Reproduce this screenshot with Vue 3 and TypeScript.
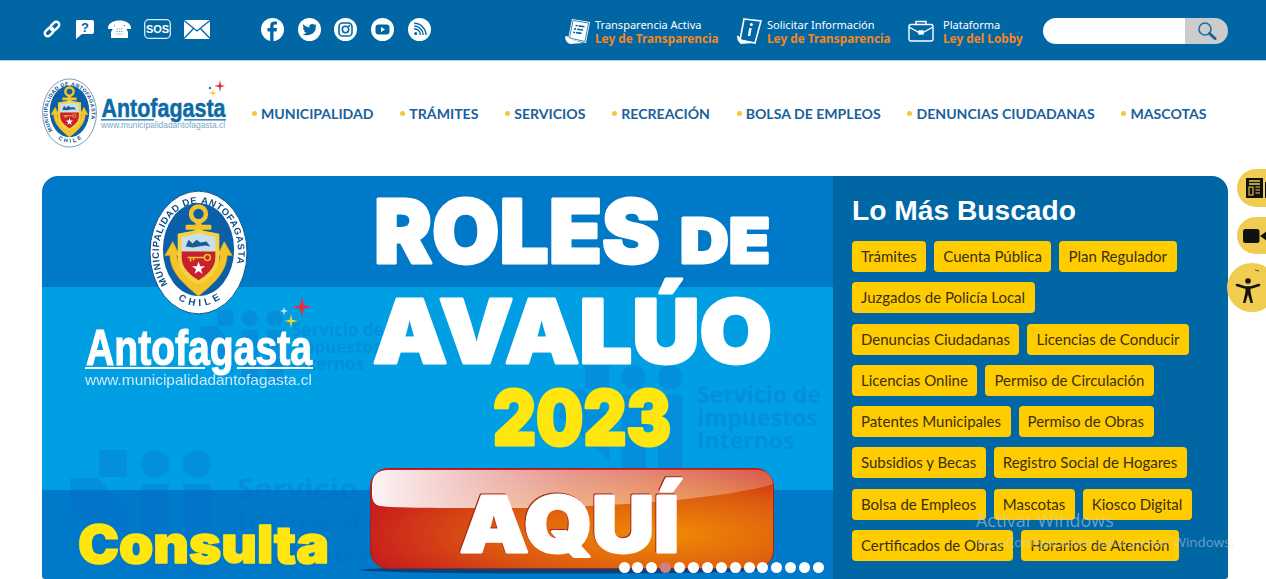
<script setup lang="ts">
const nav: string[] = ['MUNICIPALIDAD', 'TRÁMITES', 'SERVICIOS', 'RECREACIÓN', 'BOLSA DE EMPLEOS', 'DENUNCIAS CIUDADANAS', 'MASCOTAS']
const tags: string[] = ['Trámites', 'Cuenta Pública', 'Plan Regulador', 'Juzgados de Policía Local', 'Denuncias Ciudadanas', 'Licencias de Conducir', 'Licencias Online', 'Permiso de Circulación', 'Patentes Municipales', 'Permiso de Obras', 'Subsidios y Becas', 'Registro Social de Hogares', 'Bolsa de Empleos', 'Mascotas', 'Kiosco Digital', 'Certificados de Obras', 'Horarios de Atención']
const dots: number[] = Array.from({ length: 15 }, (_, i) => i)
</script>

<template>
  <div class="page">
    <svg class="defs" width="0" height="0" aria-hidden="true">
      <defs>
        <symbol id="crest" viewBox="0 0 100 126">
          <ellipse cx="50" cy="63" rx="49" ry="62" fill="#fff" stroke="#0b4f8a" stroke-width="1" />
          <path id="ringTop" d="M19 95 A40 50 0 1 1 81 95" fill="none" />
          <path id="ringBot" d="M28 110 Q50 124 72 110" fill="none" />
          <text class="ring rt" font-size="9.6"><textPath href="#ringTop">MUNICIPALIDAD DE ANTOFAGASTA</textPath></text>
          <text class="ring" font-size="10"><textPath href="#ringBot" textLength="46" startOffset="1">CHILE</textPath></text>
          <ellipse cx="50" cy="60" rx="36" ry="47" fill="#0b5ea8" />
          <circle cx="50" cy="24" r="7.5" fill="none" stroke="#f4c52a" stroke-width="4.6" />
          <rect x="37" y="35" width="26" height="5" rx="1" fill="#f4c52a" />
          <rect x="47" y="30" width="6" height="14" fill="#f4c52a" />
          <path d="M16 66 L24 52 L31 66 L28 66 C29 78 38 84 50 96 C62 84 71 78 72 66 L69 66 L76 52 L84 66 L79 66 C78 85 62 97 50 107 C38 97 22 85 21 66 Z" fill="#f4c52a" stroke="#d9a514" stroke-width=".6" />
          <path d="M29 44 C40 42 46 41 50 39 C54 41 60 42 71 44 L71 68 C71 82 60 90 50 96 C40 90 29 82 29 68 Z" fill="#f7d23d" />
          <path d="M33 47 C41 46 46 45 50 43 C54 45 59 46 67 47 L67 62 L33 62 Z" fill="#c7e0ee" />
          <path d="M33 62 L67 62 L67 68 C67 79 58 86 50 91 C42 86 33 79 33 68 Z" fill="#c8202f" />
          <path d="M37 57 L40 50 L44 54 L48 50 L52 53 L58 52 L62 57 L57 56 L50 57 L44 58 Z" fill="#1c5a94" />
          <path d="M39 68 L56 68 M42 68 L42 72 M45 68 L45 71" stroke="#f4c52a" stroke-width="1.6" fill="none" />
          <circle cx="59" cy="68" r="3" fill="none" stroke="#f4c52a" stroke-width="1.5" />
          <path d="M50 72 L51.6 76.8 L56.6 76.8 L52.5 79.8 L54 84.6 L50 81.6 L46 84.6 L47.5 79.8 L43.4 76.8 L48.4 76.8 Z" fill="#fff" />
        </symbol>
        <symbol id="sii" viewBox="0 0 150 130">
          <rect x="29" y="0" width="28" height="27" />
          <circle cx="85" cy="14" r="14" />
          <circle cx="127" cy="14" r="14" />
          <rect x="71" y="34" width="28" height="90" />
          <rect x="113" y="34" width="28" height="90" />
          <path d="M0 28 L28 28 L57 60 L57 110 L0 60 Z" />
        </symbol>
        <linearGradient id="gloss" x1="0" x2="1" y1="0" y2="0">
          <stop offset="0" stop-color="#fff" stop-opacity=".95" />
          <stop offset=".5" stop-color="#fff" stop-opacity=".5" />
          <stop offset="1" stop-color="#fff" stop-opacity=".22" />
        </linearGradient>
        <radialGradient id="btn" cx=".72" cy=".66" r=".75">
          <stop offset="0" stop-color="#f08c04" />
          <stop offset=".55" stop-color="#dc5a10" />
          <stop offset="1" stop-color="#c81e1c" />
        </radialGradient>
      </defs>
    </svg>

    <header class="topbar">
      <div class="tools">
        <svg width="20" height="20" viewBox="0 0 20 20" fill="none" stroke="#fff" stroke-width="2.4"><g transform="rotate(45 10 10)"><rect x="7" y="1" width="6" height="10" rx="3" /><rect x="7" y="9" width="6" height="10" rx="3" /></g></svg>
        <svg width="20" height="20" viewBox="0 0 20 20"><path d="M2 1 H17 a2 2 0 0 1 2 2 V13 a2 2 0 0 1 -2 2 H7 L1 20 V2 Z" fill="#fff" /><text x="10" y="12.8" text-anchor="middle" class="q">?</text></svg>
        <svg width="23" height="20" viewBox="0 0 23 20"><path d="M0 9 C0 -1 23 -1 23 9 L23 10 L17 10 L17 6 L6 6 L6 10 L0 10 Z" fill="#fff" /><path d="M7 6 H16 L20 13 V19 H3 V13 Z" fill="#fff" /><path d="M8.5 10 H14.5 M8.5 12.5 H14.5 M8.5 15 H14.5" stroke="#6ea3c6" stroke-dasharray="1.4 1" /></svg>
        <svg width="27" height="20" viewBox="0 0 27 20"><rect x=".7" y=".7" width="25.6" height="18.6" rx="4" fill="none" stroke="#dfeaf2" stroke-width="1.3" /><text x="13.5" y="14.3" text-anchor="middle" class="sos">SOS</text></svg>
        <svg width="26" height="19" viewBox="0 0 26 19"><rect width="26" height="19" fill="#fff" /><path d="M0 .5 L13 11 L26 .5 M0 18.5 L9.5 8.5 M26 18.5 L16.5 8.5" fill="none" stroke="#0066a4" stroke-width="1.3" /></svg>
      </div>
      <div class="social">
        <svg class="so" viewBox="0 0 23 23"><circle cx="11.5" cy="11.5" r="11.5" fill="#fff" /><path d="M12.5 23 V13.5 H15.5 L16 10 H12.5 V8.2 C12.5 7.2 13 6.6 14.2 6.6 H16 V3.8 C15 3.6 14.2 3.5 13.4 3.5 C10.8 3.5 9.2 5 9.2 7.8 V10 H6.5 V13.5 H9.2 V23 Z" fill="#0066a4" /></svg>
        <svg class="so" viewBox="0 0 23 23"><circle cx="11.5" cy="11.5" r="11.5" fill="#fff" /><path d="M18.5 7.2 C18 7.5 17.4 7.6 16.8 7.7 C17.4 7.3 17.9 6.8 18.1 6.1 C17.5 6.4 16.9 6.7 16.2 6.8 C15.1 5.6 13.2 5.6 12.1 6.8 C11.4 7.5 11.2 8.5 11.4 9.4 C9 9.3 6.9 8.1 5.4 6.3 C4.6 7.6 5 9.3 6.3 10.2 C5.8 10.2 5.3 10 4.9 9.8 C4.9 11.2 5.9 12.4 7.2 12.7 C6.8 12.8 6.3 12.8 5.9 12.7 C6.3 13.9 7.4 14.7 8.6 14.7 C7.4 15.7 5.9 16.1 4.4 15.9 C9.5 19.1 18.3 16.3 17.7 8.8 C18.1 8.4 18.3 7.9 18.5 7.2 Z" fill="#0066a4" /></svg>
        <svg class="so" viewBox="0 0 23 23"><circle cx="11.5" cy="11.5" r="11.5" fill="#fff" /><rect x="5" y="5" width="13" height="13" rx="3.6" fill="none" stroke="#0066a4" stroke-width="1.6" /><circle cx="11.5" cy="11.5" r="3.2" fill="none" stroke="#0066a4" stroke-width="1.6" /><circle cx="15.2" cy="7.8" r="1" fill="#0066a4" /></svg>
        <svg class="so" viewBox="0 0 23 23"><circle cx="11.5" cy="11.5" r="11.5" fill="#fff" /><rect x="4.5" y="6.5" width="14" height="10" rx="3" fill="#0066a4" /><path d="M10 9 L14 11.5 L10 14 Z" fill="#fff" /></svg>
        <svg class="so" viewBox="0 0 23 23"><circle cx="11.5" cy="11.5" r="11.5" fill="#fff" /><circle cx="7.7" cy="15.5" r="1.6" fill="#0066a4" /><path d="M6.2 10.7 A6.2 6.2 0 0 1 12.4 17 M6.2 8 A9 9 0 0 1 15.2 17 M6.2 5.3 A11.8 11.8 0 0 1 18 17" fill="none" stroke="#0066a4" stroke-width="1.4" /></svg>
      </div>
      <div class="links">
        <a class="lk lk1">
          <svg width="26" height="26" viewBox="0 0 26 26"><path d="M7 1 L25 4 L21 25 L3 21 Z" fill="#fff" /><path d="M8 2.5 L23.5 5 L20 23.5 L4.5 20 Z" fill="none" stroke="#0066a4" stroke-width=".8" /><path d="M10 8 H19 M9 11.5 H18 M8.5 15 H17" transform="rotate(8 14 12)" stroke="#0066a4" stroke-width="1.6" stroke-dasharray="2 1 8 0" /><path d="M0 19 C2 16 4 21 8 22 L18 25 L5 26 C2 25 0 22 0 19 Z" fill="#fff" /></svg>
          <span class="lt"><span>Transparencia Activa</span><b>Ley de Transparencia</b></span>
        </a>
        <a class="lk lk2">
          <svg width="25" height="26" viewBox="0 0 25 26"><path d="M7 1 L24 3 L18 25 L3 22 Z" fill="#0066a4" stroke="#fff" stroke-width="1.6" /><path d="M0 18 C1 16 3 20 5 22 L16 25 L4 26 C1 24 0 21 0 18 Z" fill="#fff" /><path d="M13.5 10 L12 18" stroke="#fff" stroke-width="2.4" /><circle cx="14.4" cy="6.6" r="1.5" fill="#fff" /></svg>
          <span class="lt"><span>Solicitar Información</span><b>Ley de Transparencia</b></span>
        </a>
        <a class="lk lk3">
          <svg width="26" height="22" viewBox="0 0 26 22" fill="none" stroke="#fff" stroke-width="1.4"><rect x="1" y="4.5" width="24" height="16.5" rx="2" /><path d="M8 4.5 V1.5 H18 V4.5" /><path d="M1 7 L11 12.5 H15 L25 7" /><rect x="11" y="11" width="4" height="3" fill="#fff" /></svg>
          <span class="lt"><span>Plataforma</span><b>Ley del Lobby</b></span>
        </a>
        <div class="search">
          <div class="field"></div>
          <div class="go">
            <svg width="20" height="20" viewBox="0 0 20 20" fill="none"><circle cx="8" cy="8" r="6" stroke="#1d6ea8" stroke-width="1.6" /><path d="M12.5 12.5 L18 17.5" stroke="#1d5f92" stroke-width="3" stroke-linecap="round" /></svg>
          </div>
        </div>
      </div>
    </header>

    <div class="head">
      <svg class="logo" width="184" height="70" viewBox="0 0 184 70">
        <use href="#crest" x="0" y="0" width="55" height="70" />
        <text x="59.5" y="39" class="brand" textLength="124" lengthAdjust="spacingAndGlyphs">Antofagasta</text>
        <rect x="59" y="41" width="53" height="1.6" fill="#3a86b8" />
        <rect x="142" y="41" width="42" height="1.6" fill="#3a86b8" />
        <text x="59" y="50" class="url" textLength="124" lengthAdjust="spacingAndGlyphs">www.municipalidadantofagasta.cl</text>
        <path d="M178 2 L179 7 L183 8 L179 9 L178 14 L177 9 L172 8 L177 7 Z" fill="#e2283a" />
        <path d="M171 11 L171.7 14.3 L175 15 L171.7 15.7 L171 19 L170.3 15.7 L167 15 L170.3 14.3 Z" fill="#f4c52a" />
        <circle cx="168" cy="10" r="1.2" fill="#2e6ea6" />
      </svg>
      <nav class="nav">
        <a v-for="n in nav" :key="n" class="item"><i></i>{{ n }}</a>
      </nav>
    </div>

    <main class="hero">
      <div class="banner">
        <svg class="art" width="791" height="403" viewBox="42 176 791 403">
          <rect x="42" y="176" width="791" height="111" fill="#0079c8" />
          <rect x="42" y="287" width="791" height="203" fill="#009fe3" />
          <rect x="42" y="490" width="791" height="89" fill="#0079c8" />

          <g class="wm">
            <use href="#sii" x="70" y="450" width="150" height="130" />
            <text x="237" y="500" font-size="31">Servicio de</text>
            <text x="237" y="532" font-size="31">Impuestos</text>
            <text x="237" y="564" font-size="31">Internos</text>
            <use href="#sii" x="560" y="365" width="130" height="113" />
            <text x="697" y="403" font-size="23">Servicio de</text>
            <text x="697" y="426" font-size="23">Impuestos</text>
            <text x="697" y="449" font-size="23">Internos</text>
            <use href="#sii" x="200" y="310" width="88" height="76" />
            <text x="292" y="336" font-size="17">Servicio de</text>
            <text x="292" y="353" font-size="17">Impuestos</text>
            <text x="292" y="370" font-size="17">Internos</text>
          </g>

          <use href="#crest" x="149" y="190" width="99" height="125" />
          <text x="86" y="365" class="ab" textLength="226" lengthAdjust="spacingAndGlyphs">Antofagasta</text>
          <rect x="85" y="367" width="120" height="2" fill="#fff" />
          <rect x="237" y="367" width="76" height="2" fill="#fff" />
          <text x="85" y="385" class="aurl" textLength="227" lengthAdjust="spacingAndGlyphs">www.municipalidadantofagasta.cl</text>
          <path d="M302 297 L304 305 L311 307 L304 309 L302 317 L300 309 L293 307 L300 305 Z" fill="#d8353e" />
          <path d="M291 314 L292.2 319.8 L298 321 L292.2 322.2 L291 328 L289.8 322.2 L284 321 L289.8 319.8 Z" fill="#f4d02a" />
          <path d="M284 307 L285 310 L288 311 L285 312 L284 315 L283 312 L280 311 L283 310 Z" fill="#cfe0f2" />

          <text x="374" y="263" class="big" font-size="88" textLength="286" lengthAdjust="spacingAndGlyphs">ROLES</text>
          <text x="680" y="263" class="big" font-size="62" textLength="90" lengthAdjust="spacingAndGlyphs">DE</text>
          <text x="373" y="362.5" class="big" font-size="88" textLength="399" lengthAdjust="spacingAndGlyphs">AVALÚO</text>
          <text x="493" y="444.5" class="big yel" font-size="76" textLength="178" lengthAdjust="spacingAndGlyphs">2023</text>
          <text x="78" y="563" class="big yel thin" font-size="52" textLength="251" lengthAdjust="spacingAndGlyphs">Consulta</text>

          <ellipse cx="560" cy="570" rx="200" ry="3.5" fill="#06335e" opacity=".75" />
          <rect x="370.5" y="468.5" width="403" height="100" rx="18" fill="url(#btn)" stroke="#a81c24" />
          <path d="M372 486 C372 475 378 470 388 470 H756 C768 470 772 476 773 484 C720 500 600 508 500 508 C440 508 395 508 380 506 C374 505 372 500 372 494 Z" fill="url(#gloss)" />
          <text x="460" y="552" class="big aq" font-size="77" textLength="219" lengthAdjust="spacingAndGlyphs">AQUÍ</text>
        </svg>
        <div class="dots">
          <span v-for="d in dots" :key="d" :class="{ on: d === 3 }"></span>
        </div>
      </div>
      <aside class="pane">
        <h2>Lo Más Buscado</h2>
        <div class="tags">
          <a v-for="t in tags" :key="t" class="tag">{{ t }}</a>
        </div>
      </aside>
    </main>

    <div class="side s1">
      <svg width="24" height="22" viewBox="0 0 24 22"><path d="M1 1 H18 V21 H1 Z" fill="#111" /><path d="M4 4 H15 M4 7 H15" stroke="#f0cd50" stroke-width="1.4" /><path d="M4 10 H8 V18 H4 Z M10.5 10 H15 M10.5 13 H15 M10.5 16 H15" stroke="#f0cd50" stroke-width="1.1" fill="none" /><path d="M20 5 H24 V21 H20 Z" fill="#111" /></svg>
    </div>
    <div class="side s2">
      <svg width="24" height="16" viewBox="0 0 24 16"><rect x="0" y="1" width="16.5" height="14" rx="2.5" fill="#111" /><path d="M17 8 L24 3 V13 Z" fill="#111" /></svg>
    </div>
    <div class="side s3">
      <svg class="acc" width="24" height="26" viewBox="0 0 24 26"><path d="M19 -8 L23 -7" stroke="#333" stroke-width=".8" /><circle cx="12" cy="3" r="2.8" fill="#111" /><path d="M1 7 L9 9.5 H15 L23 7" stroke="#111" stroke-width="2.6" stroke-linecap="round" fill="none" /><path d="M9.5 9 H14.5 V14 L17 25 H14.6 L12 16.5 L9.4 25 H7 L9.5 14 Z" fill="#111" /></svg>
    </div>

    <div class="winmark">
      <div class="w1">Activar Windows</div>
      <div class="w2">Ve a Configuración para activar Windows.</div>
    </div>
  </div>
</template>

<style scoped>
.page { position: relative; width: 1266px; height: 579px; overflow: hidden; background: #fff; font-family: Lato, "Liberation Sans", sans-serif; }
.defs { position: absolute; }
.topbar { display: flex; align-items: center; height: 58px; padding: 0 38px 2px 42px; background: #0066a4; border-bottom: 1px solid #b5d4e6; }
.tools { display: flex; align-items: center; gap: 13px; width: 219px; }
.tools svg { flex: none; overflow: visible; }
.q { font: 700 13px "Liberation Sans", sans-serif; fill: #0066a4; }
.sos { font: 700 11px "Liberation Sans", sans-serif; fill: #fff; }
.social { display: flex; gap: 13.7px; width: 304px; }
.so { width: 23px; height: 23px; flex: none; }
.links { display: flex; align-items: center; flex: 1; padding-top: 4px; }
.lk { display: flex; align-items: center; color: #fff; }
.lk1 { gap: 4px; width: 172px; }
.lk2 { gap: 5px; width: 171px; }
.lk3 { gap: 9px; width: 135px; }
.lt { display: flex; flex-direction: column; font-family: "Noto Sans", sans-serif; font-size: 11px; line-height: 13px; white-space: nowrap; }
.lt b { color: #f5861f; font-weight: 700; font-size: 11.8px; line-height: 14px; }
.search { display: flex; width: 185px; height: 26px; border-radius: 13px; overflow: hidden; }
.field { flex: 1; background: #fff; }
.go { width: 43px; background: #ccc; display: flex; align-items: center; justify-content: center; }
.head { display: flex; height: 115px; padding: 17px 0 0 42px; box-sizing: border-box; }
.logo { flex: none; overflow: visible; }
.brand { font: 700 26px "Liberation Sans", sans-serif; fill: #0c6aa6; stroke: #0c6aa6; stroke-width: .5px; }
.url { font: 400 8.6px "Liberation Sans", sans-serif; fill: #7ba7c6; }
.ring { font-family: "Liberation Sans", sans-serif; font-weight: 700; fill: #0b4f8a; }
.rt { letter-spacing: .7px; }
.nav { display: flex; gap: 26.8px; margin-left: 26px; height: 71px; align-items: center; }
.item { display: flex; align-items: center; color: #1a609c; font-size: 14.1px; font-weight: 700; white-space: nowrap; }
.item i { width: 5px; height: 5px; border-radius: 50%; background: #f2c73c; margin-right: 4px; }
.hero { display: flex; margin: 0 38px 0 42px; height: 403px; border-radius: 16px 16px 3px 3px; overflow: hidden; }
.banner { position: relative; width: 791px; flex: none; }
.art { display: block; }
.wm { fill: #0a6fce; opacity: .32; font: 700 20px "Open Sans", sans-serif; }
.ab { font: 700 50px "Liberation Sans", sans-serif; fill: #fff; stroke: #fff; stroke-width: 1.2px; }
.aurl { font: 400 15px "Liberation Sans", sans-serif; fill: #cfe9f7; }
.big { font-family: Inter, Roboto, sans-serif; font-weight: 900; fill: #fff; stroke: #fff; stroke-width: 3px; stroke-linejoin: round; }
.yel { fill: #ffe60f; stroke: #ffe60f; }
.thin { stroke-width: 1.6px; }
.aq { filter: drop-shadow(-1px -1px 0 #a5281a); }
.dots { position: absolute; right: 9px; bottom: 6px; display: flex; gap: 2.9px; }
.dots span { width: 11px; height: 11px; border-radius: 50%; background: #fff; }
.dots .on { background: #d08080; }
.pane { flex: 1; background: #0066a4; padding: 17px 31px 0 19px; box-sizing: border-box; }
.pane h2 { margin: 0 0 14px; font: 700 28.2px/34px "Liberation Sans", sans-serif; color: #fff; white-space: nowrap; }
.tags { display: flex; flex-wrap: wrap; gap: 10.3px 8px; }
.tag { height: 31px; padding: 0 9.6px 0 9px; border-radius: 4px; background: #ffcc00; color: #3a2f10; font-size: 15px; line-height: 31px; white-space: nowrap; }
.side { position: absolute; display: flex; align-items: center; background: #f0cd50; border-radius: 19px 0 0 19px; }
.s1 { left: 1237px; top: 169px; width: 40px; height: 38px; padding-left: 8px; }
.s2 { left: 1237px; top: 217px; width: 40px; height: 37px; padding-left: 6px; }
.s3 { left: 1227px; top: 263px; width: 50px; height: 49px; padding: 7px 0 0 9px; box-sizing: border-box; border-radius: 50%; }
.acc { overflow: visible; }
.winmark { position: absolute; left: 976px; top: 509px; color: rgba(200, 210, 225, .55); font-family: "Open Sans", sans-serif; pointer-events: none; white-space: nowrap; }
.w1 { font-size: 17.9px; line-height: 22px; }
.w2 { font-size: 13.4px; line-height: 20px; margin-top: 1px; }
</style>
<style>
html, body { margin: 0; overflow: hidden; }
</style>
